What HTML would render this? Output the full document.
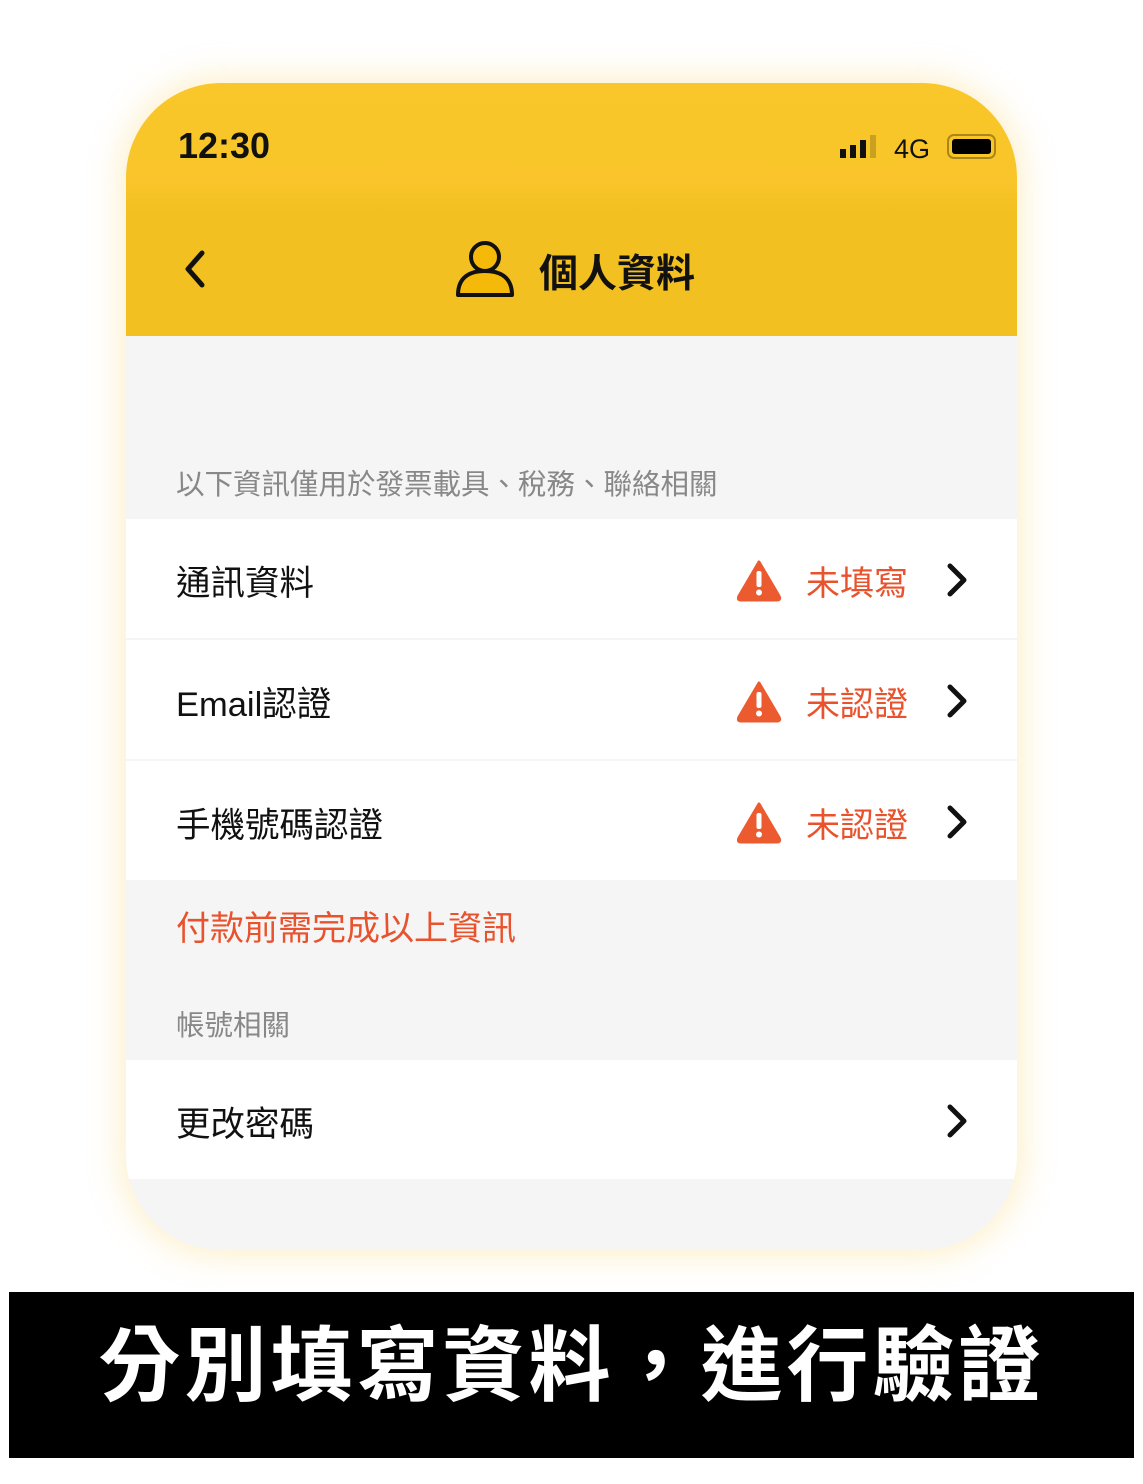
<!DOCTYPE html>
<html><head><meta charset="utf-8"><style>
*{margin:0;padding:0;box-sizing:border-box}
body{width:1143px;height:1484px;background:#fff;position:relative;font-family:"Liberation Sans","Noto Sans CJK TC",sans-serif;overflow:hidden}
.phone{position:absolute;left:126px;top:83px;width:891px;height:1167px;border-radius:95px;background:#f5f5f5;overflow:hidden;box-shadow:0 0 30px 8px rgba(250,215,120,.35)}
.hdr{position:absolute;left:0;top:0;width:891px;height:253px;background:linear-gradient(#f9c72a 0,#f9c52a 100px,#f2c020 130px,#f2c020 253px)}
.t{position:absolute;white-space:nowrap}
.row{position:absolute;left:0;width:891px;height:119px;background:#fff}
.row .l{position:absolute;left:50px;top:36px;font-size:34.5px;color:#111}
.row .w{position:absolute;left:611px;top:40px}
.row .s{position:absolute;left:680px;top:37px;font-size:34px;color:#e8522c}
.row .c{position:absolute;left:818px;top:42px}
.banner{position:absolute;left:9px;top:1292px;width:1125px;height:166px;background:#000;color:#fff;font-size:82px;font-weight:bold;text-align:center;line-height:150px;letter-spacing:4px}
</style></head><body>
<div class="phone">
<div class="hdr">
<div class="t" style="left:52px;top:42px;font-size:36px;font-weight:bold;color:#111">12:30</div>
<svg class="t" style="left:714px;top:50px" width="160" height="30"><rect x="0" y="16" width="6" height="9" fill="#111"/><rect x="10" y="12" width="6" height="13" fill="#111"/><rect x="20" y="7" width="6" height="18" fill="#111"/><rect x="30" y="2" width="6" height="23" fill="#c9a020"/><text x="54" y="25" font-size="27" font-family="Liberation Sans" fill="#111">4G</text><rect x="108" y="2" width="47" height="23" rx="6" fill="none" stroke="#a8861a" stroke-width="2"/><rect x="112" y="6" width="39" height="15" rx="3" fill="#000"/></svg>
<svg class="t" style="left:56px;top:166px" width="26" height="40"><path d="M20 4 L6 20 L20 36" fill="none" stroke="#111" stroke-width="5" stroke-linecap="round" stroke-linejoin="round"/></svg>
<svg class="t" style="left:328px;top:154px" width="64" height="64"><circle cx="31" cy="20" r="14" fill="#f5b90a" stroke="#111" stroke-width="4"/><path d="M4 58 C4 40 16 34 31 34 C46 34 58 40 58 58 Z" fill="#f5b90a" stroke="#111" stroke-width="4" stroke-linejoin="round"/></svg>
<div class="t" style="left:413px;top:160px;font-size:39px;font-weight:bold;color:#111">個人資料</div>
</div>
<div class="t" style="left:50px;top:379px;font-size:28.5px;color:#888">以下資訊僅用於發票載具、稅務、聯絡相關</div>
<svg width="0" height="0" style="position:absolute"><defs><g id="w"><path d="M22 3 L42 37 Q44 41 40 41 L4 41 Q0 41 2 37 Z" fill="#ec5a30" stroke="#ec5a30" stroke-width="3" stroke-linejoin="round"/><rect x="19.5" y="12" width="5" height="16" rx="2" fill="#fff"/><circle cx="22" cy="33.5" r="3" fill="#fff"/></g><g id="c"><path d="M6 5 L20 19 L6 33" fill="none" stroke="#111" stroke-width="5" stroke-linecap="round" stroke-linejoin="round"/></g></defs></svg>
<div class="row" style="top:436px"><div class="l">通訊資料</div><svg class="w" width="46" height="44"><use href="#w"/></svg><div class="s">未填寫</div><svg class="c" width="26" height="40"><use href="#c"/></svg></div>
<div class="row" style="top:557px"><div class="l">Email認證</div><svg class="w" width="46" height="44"><use href="#w"/></svg><div class="s">未認證</div><svg class="c" width="26" height="40"><use href="#c"/></svg></div>
<div class="row" style="top:678px"><div class="l">手機號碼認證</div><svg class="w" width="46" height="44"><use href="#w"/></svg><div class="s">未認證</div><svg class="c" width="26" height="40"><use href="#c"/></svg></div>
<div class="t" style="left:50px;top:818px;font-size:34px;color:#e8522c">付款前需完成以上資訊</div>
<div class="t" style="left:50px;top:920px;font-size:28.5px;color:#888">帳號相關</div>
<div class="row" style="top:977px"><div class="l">更改密碼</div><svg class="c" width="26" height="40"><use href="#c"/></svg></div>
</div>
<div class="banner">分別填寫資料，進行驗證</div>
</body></html>
